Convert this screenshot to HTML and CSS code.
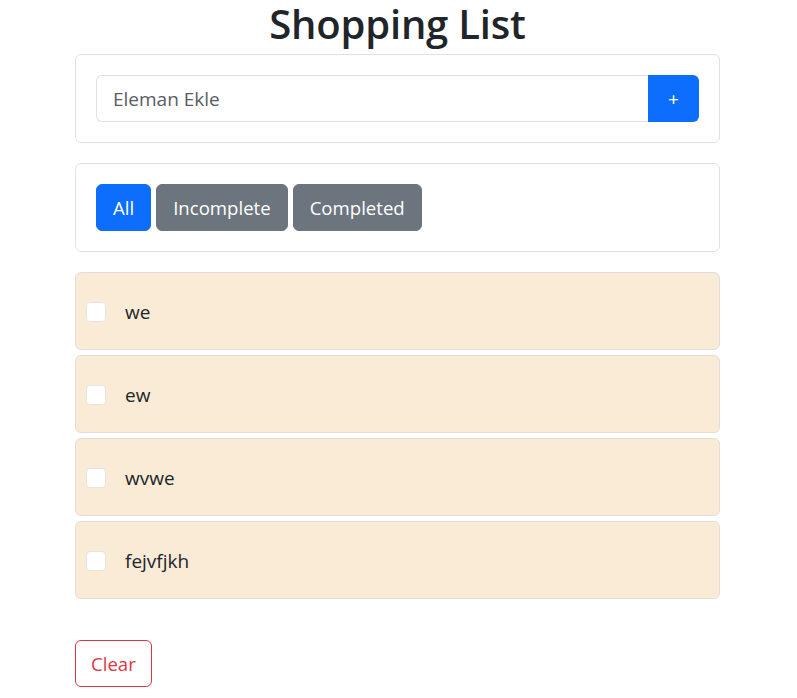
FILE: index.html
```html
<!DOCTYPE html>
<html lang="en">
<head>
<meta charset="utf-8">
<title>Shopping List</title>
<link rel="stylesheet" href="styles.css">
</head>
<body>
<div class="app">
  <h1 class="title">Shopping List</h1>
  <div class="card">
    <div class="input-group">
      <input class="field" type="text" placeholder="Eleman Ekle">
      <button class="add-btn">+</button>
    </div>
  </div>
  <div class="card filters">
    <button class="btn btn-primary">All</button>
    <button class="btn btn-secondary">Incomplete</button>
    <button class="btn btn-secondary">Completed</button>
  </div>
  <ul class="list">
    <li class="item"><span class="check"></span><span class="label">we</span></li>
    <li class="item"><span class="check"></span><span class="label">ew</span></li>
    <li class="item"><span class="check"></span><span class="label">wvwe</span></li>
    <li class="item"><span class="check"></span><span class="label">fejvfjkh</span></li>
  </ul>
  <div class="footer">
    <button class="btn btn-outline-danger">Clear</button>
  </div>
</div>
</body>
</html>
```

FILE: styles.css
```css
* { box-sizing: border-box; }
body {
  margin: 0;
  font-family: "Open Sans", "Noto Sans", sans-serif;
  color: #212529;
  background: #fff;
}
.app {
  width: 645px;
  margin-left: 75px;
  display: flex;
  flex-direction: column;
}
.title {
  margin: 0 0 6px;
  font-size: 40px;
  line-height: 48px;
  font-weight: 600;
  text-align: center;
  letter-spacing: -0.2px;
}
.card {
  border: 1px solid #dee2e6;
  border-radius: 6px;
  padding: 20px;
  background: #fff;
}
.input-group {
  display: flex;
  height: 47px;
}
.field {
  flex: 1;
  min-width: 0;
  border: 1px solid #dee2e6;
  border-right: none;
  border-radius: 6px 0 0 6px;
  padding: 0 16px;
  font-family: inherit;
  font-size: 19px;
  color: #212529;
  outline: none;
}
.field::placeholder { color: #595c5f; }
.add-btn {
  width: 51px;
  border: none;
  border-radius: 0 6px 6px 0;
  background: #0d6efd;
  color: #fff;
  font-family: inherit;
  font-size: 19px;
  padding: 0;
}
.filters {
  margin-top: 20px;
  display: flex;
  gap: 5px;
}
.btn {
  height: 47px;
  padding: 0 16px;
  border-radius: 6px;
  font-family: inherit;
  font-size: 18.6px;
  border: 1px solid transparent;
  cursor: pointer;
}
.btn-primary { background: #0d6efd; color: #fff; border-color: #0d6efd; }
.btn-secondary { background: #6c757d; color: #fff; border-color: #6c757d; }
.btn-outline-danger { background: #fff; color: #dc3545; border-color: #dc3545; padding: 0 15px; }
.list {
  list-style: none;
  margin: 20px 0 0;
  padding: 0;
  display: flex;
  flex-direction: column;
  gap: 5px;
}
.item {
  height: 78px;
  display: flex;
  align-items: center;
  padding: 2px 10px 0;
  background: #faebd7;
  border: 1px solid #e2ddd6;
  border-radius: 6px;
}
.check {
  width: 20px;
  height: 20px;
  background: #fff;
  border: 1px solid #e4e4e4;
  border-radius: 4px;
  flex: none;
}
.label {
  margin-left: 19px;
  font-size: 19px;
}
.footer {
  margin-top: 41px;
  display: flex;
}
```
